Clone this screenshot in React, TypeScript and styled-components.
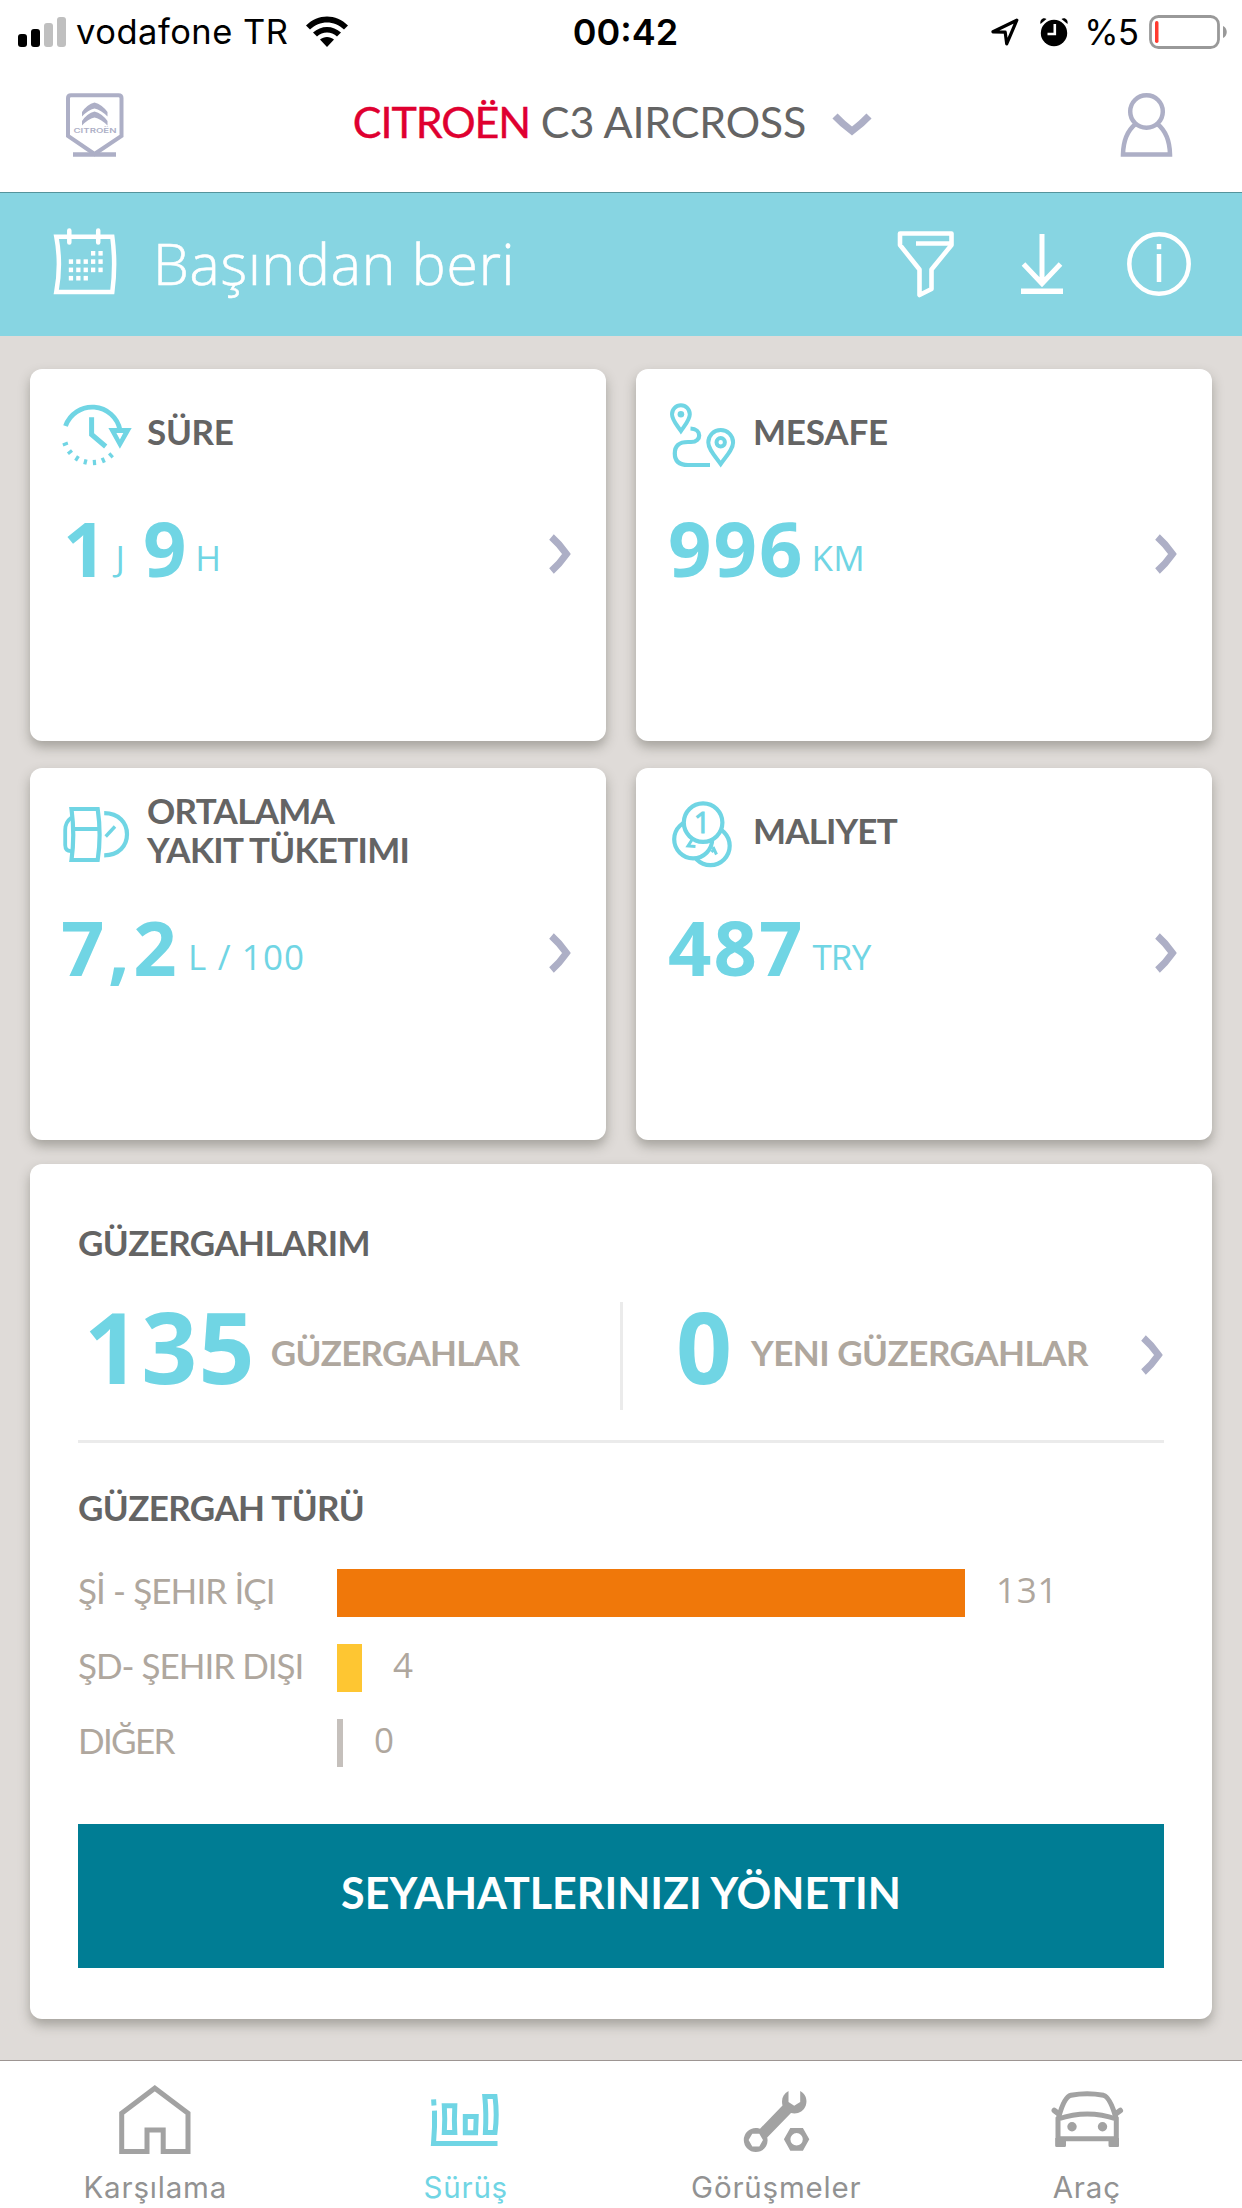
import React from "react";
import styled, { createGlobalStyle } from "styled-components";

const c = {
  aqua: "#70d5e4",
  banner: "#87d5e2",
  page: "#dfdbd8",
  ink: "#646464",
  taupe: "#afa79e",
  lilac: "#adafc6",
  red: "#df0030",
  teal: "#007d94",
  line: "#ebebeb",
  tab: "#929292",
  tabIcon: "#a2a2a2",
};

const lato = `Lato, "Open Sans", sans-serif`;
const open = `"Open Sans", "Noto Sans", sans-serif`;
const inter = `Inter, Roboto, sans-serif`;

const Global = createGlobalStyle`
  * { box-sizing: border-box; }
  body { margin: 0; background: ${c.page}; }
  svg { display: block; flex: none; overflow: visible; }
`;

const Screen = styled.div`
  width: 1242px;
  height: 2208px;
  display: flex;
  flex-direction: column;
  background: ${c.page};
  overflow: hidden;
  white-space: nowrap;
`;

/* ---------- status bar ---------- */
const StatusBar = styled.div`
  height: 62px;
  flex: none;
  display: grid;
  grid-template-columns: 1fr auto 1fr;
  align-items: center;
  padding: 0 15px 0 18px;
  background: #fff;
  color: #000;
  font: 400 35px/62px ${inter};
`;
const StatusSide = styled.div<{ $end?: boolean }>`
  display: flex;
  align-items: center;
  justify-content: ${(p) => (p.$end ? "flex-end" : "flex-start")};
`;
const Carrier = styled.span`
  margin: 0 17px 0 9px;
  font-size: 34.5px;
  letter-spacing: 0.5px;
`;
const Clock = styled.span`
  padding: 1px 0 0 6px;
  font-size: 36px;
  font-weight: 600;
`;
const Percent = styled.span`
  margin: 0 11px 0 16px;
  letter-spacing: -1px;
`;
const AlarmSlot = styled.span`
  margin-left: 21px;
`;

/* ---------- header ---------- */
const Header = styled.header`
  height: 131px;
  flex: none;
  display: flex;
  align-items: center;
  justify-content: space-between;
  padding: 0 68px 5px 64px;
  background: #fff;
  border-bottom: 1px solid #55949c;
`;
const CarPicker = styled.div`
  display: flex;
  align-items: center;
  padding-right: 20px;
`;
const CarName = styled.h1`
  margin: 0 26px 6px 0;
  font: 400 43px/50px ${lato};
  letter-spacing: -0.2px;
  color: ${c.ink};
`;
const Brand = styled.span`
  color: ${c.red};
  letter-spacing: -1.1px;
  -webkit-text-stroke: 0.4px currentColor;
`;

/* ---------- period banner ---------- */
const Banner = styled.div`
  height: 143px;
  flex: none;
  display: flex;
  align-items: center;
  padding: 0 49px 1px 52px;
  background: ${c.banner};
  color: #fff;
`;
const CalendarSlot = styled.div`
  padding-bottom: 6px;
`;
const Period = styled.div`
  flex: 1;
  padding: 0 0 2px 35px;
  font: 300 57px/80px ${open};
  letter-spacing: 0.8px;
  -webkit-text-stroke: 0.6px currentColor;
`;
const BannerActions = styled.div`
  display: grid;
  grid-template-columns: 60px 46px 68px;
  align-items: center;
  column-gap: 60px;
`;
const FunnelSlot = styled.div`
  margin-left: -3px;
`;

/* ---------- cards ---------- */
const Main = styled.main`
  flex: 1;
  padding: 33px 30px 0;
`;
const Card = styled.section`
  background: #fff;
  border-radius: 12px;
  box-shadow: 0 6px 12px rgba(60, 60, 50, 0.36);
`;
const Grid = styled.div`
  display: grid;
  grid-template-columns: 576px 576px;
  gap: 27px 30px;
`;
const StatCard = styled(Card)`
  height: 372px;
  padding: 26px 35px 0 32px;
`;
const StatHead = styled.div`
  height: 72px;
  display: flex;
  align-items: center;
  gap: 13px;
`;
const Title = styled.h2<{ $ls?: number }>`
  margin: 0;
  font: 700 35px/39px ${lato};
  letter-spacing: ${(p) => p.$ls ?? -0.6}px;
  color: ${c.ink};
`;
const StatValue = styled.div`
  height: 80px;
  margin-top: 41px;
  display: flex;
  justify-content: space-between;
`;
const Figures = styled.div`
  display: flex;
  color: ${c.aqua};
`;
const Big = styled.span<{ $ls?: number; $ml?: number }>`
  margin-left: ${(p) => p.$ml ?? 0}px;
  font: 700 76px/80px ${open};
  letter-spacing: ${(p) => p.$ls ?? 2}px;
`;
const Unit = styled.span<{ $ml?: number; $ls?: number }>`
  margin-left: ${(p) => p.$ml ?? 0}px;
  padding-top: 10px;
  font: 400 35px/80px ${open};
  letter-spacing: ${(p) => p.$ls ?? 0}px;
`;
const ChevronSlot = styled.div`
  display: flex;
  align-items: center;
  padding-top: 12px;
`;

/* ---------- trips ---------- */
const Trips = styled(Card)`
  height: 855px;
  margin-top: 24px;
  padding: 59px 48px 0;
  display: flex;
  flex-direction: column;
`;
const Totals = styled.div`
  height: 161px;
  margin-top: 20px;
  flex: none;
  display: flex;
  padding-top: 20px;
  border-bottom: 3px solid ${c.line};
`;
const Total = styled.div`
  display: flex;
  flex: 1;
  align-items: center;
  height: 108px;
  padding-left: 53px;
`;
const TotalLeft = styled(Total)`
  flex: none;
  width: 545px;
  padding-left: 6px;
  border-right: 3px solid ${c.line};
`;
const TotalNumber = styled.span<{ $ls: number }>`
  margin-top: -20px;
  font: 700 98px/108px ${open};
  letter-spacing: ${(p) => p.$ls}px;
  color: ${c.aqua};
`;
const TotalLabel = styled.span<{ $ml: number; $ls: number }>`
  margin: -8px 0 0 ${(p) => p.$ml}px;
  font: 700 35px/40px ${lato};
  letter-spacing: ${(p) => p.$ls}px;
  color: ${c.taupe};
`;
const TotalArrow = styled.span`
  margin: -2px 1px 0 auto;
`;
const TypeTitle = styled(Title)`
  margin-top: 45px;
`;
const Chart = styled.div`
  margin-top: 42px;
  display: flex;
  flex-direction: column;
  gap: 27px;
`;
const ChartRow = styled.div`
  height: 48px;
  display: flex;
  align-items: center;
`;
const ChartLabel = styled.span<{ $ls: number }>`
  width: 259px;
  padding-bottom: 6px;
  font: 400 35px/42px ${lato};
  letter-spacing: ${(p) => p.$ls}px;
  color: ${c.taupe};
`;
const Bar = styled.span<{ $color: string }>`
  height: 48px;
  background: ${(p) => p.$color};
`;
const ChartValue = styled.span`
  margin-left: 31px;
  padding-bottom: 6px;
  font: 400 35px/42px ${open};
  letter-spacing: 0.8px;
  color: ${c.taupe};
`;
const Manage = styled.button`
  height: 144px;
  margin-top: 57px;
  padding: 0 0 7px;
  border: 0;
  background: ${c.teal};
  color: #fff;
  font: 700 43px/52px ${lato};
  letter-spacing: 0;
`;

/* ---------- tab bar ---------- */
const TabBar = styled.nav`
  height: 148px;
  flex: none;
  display: grid;
  grid-template-columns: repeat(4, 1fr);
  background: #fff;
  border-top: 1px solid #9d9592;
`;
const Tab = styled.a<{ $active?: boolean }>`
  display: flex;
  flex-direction: column;
  align-items: center;
  padding-top: 22px;
  color: ${(p) => (p.$active ? c.aqua : c.tabIcon)};
`;
const TabLabel = styled.span<{ $active?: boolean }>`
  margin-top: 10px;
  font: 400 29.5px/40px ${inter};
  letter-spacing: 0.8px;
  color: ${(p) => (p.$active ? c.aqua : c.tab)};
`;

/* ---------- drawings ---------- */
const Signal = () => (
  <svg width="49" height="32" viewBox="0 0 49 32">
    <rect x="0" y="18" width="9" height="13" rx="3" />
    <rect x="13" y="13" width="9" height="18" rx="3" />
    <rect x="26" y="7" width="9" height="24" rx="3" fill="#bfbfbf" />
    <rect x="39" y="1" width="9" height="30" rx="3" fill="#bfbfbf" />
  </svg>
);
const Wifi = () => (
  <svg width="42" height="32" viewBox="0 0 42 32">
    <path d="M0 9.5C12-2.5 30-2.5 42 9.5L38 13.5C28.5 4 13.500 4 4 13.500Z" />
    <path d="M7 16.500C15 9 27 9 35 16.500L31 20.500C25.500 15 16.500 15 11 20.500Z" />
    <path d="M14 23.500C18 20 24 20 28 23.500L21 31Z" />
  </svg>
);
const Locate = () => (
  <svg width="28" height="28" viewBox="0 0 28 28" fill="none" stroke="#000" strokeWidth="3.200" strokeLinejoin="round">
    <path d="M25.800 2.200L2 13.800L14.200 14.200L15.700 25.800Z" />
  </svg>
);
const Alarm = () => (
  <svg width="28" height="30" viewBox="0 0 28 30">
    <circle cx="14" cy="16" r="13.200" />
    <path d="M.500 7C-.500 3 3 0 6.500 2ZM27.500 7C28.500 3 25 0 21.500 2Z" />
    <path d="M14.800 7V17H7.500" fill="none" stroke="#fff" strokeWidth="2.600" />
  </svg>
);
const Battery = () => (
  <svg width="78" height="34" viewBox="0 0 78 34">
    <rect x="1.500" y="1.500" width="68" height="31" rx="8" fill="none" stroke="#999" strokeWidth="2.800" />
    <rect x="6" y="6" width="3.500" height="22" rx="1.700" fill="#ff3b30" />
    <path d="M74 11C79 13 79 21 74 23Z" fill="#999" />
  </svg>
);
const Logo = () => (
  <svg width="62" height="68" viewBox="0 0 62 68" fill="none" stroke={c.lilac} strokeWidth="4">
    <path d="M30.500 63L4 45V7Q4 4.300 7 4.300H54.500Q57.500 4.300 57.500 7V45Z" />
    <path d="M9 63.500H52" strokeWidth="4.600" />
    <g fill={c.lilac} stroke="none">
      <path d="M18 21Q23 13.500 30.500 11.500Q38 13.500 43.500 21V25.500Q37 19 30.500 17.500Q24 19 18 25.500Z" />
      <path d="M18 30Q23 22.500 30.500 20.500Q38 22.500 43.500 30V34.500Q37 28 30.500 26.500Q24 28 18 34.500Z" />
      <text x="9.500" y="42.300" fontFamily="Inter, sans-serif" fontSize="6" fontWeight="600" textLength="43" lengthAdjust="spacingAndGlyphs">CITROËN</text>
    </g>
  </svg>
);
const ChevronDown = () => (
  <svg width="40" height="24" viewBox="0 0 40 24" fill="none" stroke={c.lilac} strokeWidth="7">
    <path d="M3 3Q10 10.500 20 18Q30 10.500 37 3" />
  </svg>
);
const Person = () => (
  <svg width="55" height="68" viewBox="0 0 55 68" fill="none" stroke={c.lilac} strokeWidth="4.500">
    <circle cx="27.500" cy="20.500" r="16.300" />
    <path d="M16.500 33C8 40 4.200 52 4 63.500H51C50.800 52 47 40 38.500 33" />
  </svg>
);
const calendarDots = [[3, 4], [0, 1, 2, 3, 4], [0, 1, 2, 3, 4], [0, 1, 2]];
const Calendar = () => (
  <svg width="66" height="70" viewBox="0 0 66 70" fill="none" stroke="#fff" strokeWidth="4.500">
    <path d="M4.300 10.700H60.300Q64 38 60.300 66H4.300Q9.500 38 4.300 10.700Z" />
    <path d="M17.300 4.500V16.500M46.200 4.500V16.500" strokeLinecap="round" />
    {calendarDots.map((cols, r) =>
      cols.map((k) => (
        <rect key={`${r}-${k}`} x={16.800 + k * 7.400} y={25 + r * 8.300} width="4.300" height="4.600" fill="#fff" stroke="none" />
      ))
    )}
  </svg>
);
const Funnel = () => (
  <svg width="60" height="70" viewBox="0 0 60 70" fill="none" stroke="#fff" strokeWidth="4.600" strokeLinejoin="round">
    <path d="M4 4.500H55.500V16L35.500 40.500V60L23.500 66V40.500L4 16Z" />
    <path d="M20 14.500H54" />
  </svg>
);
const Download = () => (
  <svg width="46" height="64" viewBox="0 0 46 64" fill="none" stroke="#fff" strokeWidth="5">
    <path d="M23 2V52M4.500 32L23 51.500L41.500 32" />
    <path d="M2 59.200H44" strokeWidth="5.500" />
  </svg>
);
const Info = () => (
  <svg width="68" height="68" viewBox="0 0 68 68" fill="none" stroke="#fff" strokeWidth="4.500">
    <circle cx="34" cy="34" r="29.700" />
    <path d="M34 14V19.300M34 24V52" />
  </svg>
);
const ChevronRight = () => (
  <svg width="22" height="40" viewBox="0 0 22 40" fill="none" stroke={c.lilac} strokeWidth="7">
    <path d="M2.500 3Q10.500 10 17.500 20Q10.500 30 2.500 37" />
  </svg>
);

type IconProps = { children: React.ReactNode };
const CardIcon = ({ children }: IconProps) => (
  <svg width="72" height="72" viewBox="0 0 72 72" fill="none" stroke={c.aqua} strokeWidth="4.200">
    {children}
  </svg>
);
const TimeIcon = () => (
  <CardIcon>
    <path d="M3.500 31A28.300 28.300 0 0 1 58 35" strokeWidth="4.800" />
    <path d="M29.600 22.300V39.500L43.700 51.500" strokeWidth="5" />
    <path d="M46.400 33H69.700L57.900 53.700ZM54.400 38L57.900 44.500L61.300 38Z" fill={c.aqua} fillRule="evenodd" stroke="none" />
    {[48, 66.500, 85, 103.500, 122, 141, 160].map((a) => (
      <path key={a} d="M55.700 39.300H61" transform={`rotate(${a} 30 39.300)`} strokeWidth="3.200" />
    ))}
  </CardIcon>
);
const RouteIcon = () => (
  <CardIcon>
    <path d="M12.900 36C9 30 4 25 4 19.200a8.900 8.900 0 0 1 17.800 0C21.800 25 17 30 12.900 36Z" strokeWidth="4" />
    <circle cx="12.900" cy="19.300" r="3.300" fill={c.aqua} stroke="none" />
    <path d="M52.700 69C47 61 40.300 54 40.300 47.400a12.400 12.400 0 0 1 24.800 0C65.100 54 58.500 61 52.700 69Z" strokeWidth="4" />
    <circle cx="52.700" cy="47.300" r="4.200" strokeWidth="4" />
    <path d="M22.500 33.500C34 34 34 47 23 47H20C11 47 6.800 51 6.800 58.500S11 70 20 70H42" />
  </CardIcon>
);
const FuelIcon = () => (
  <CardIcon>
    <path d="M9.500 15H35.700Q39.500 41 35.700 66H9.500Q13 41 9.500 15ZM11 35H37" />
    <path d="M9.500 23.500Q3.200 28 3.200 36V51Q3.200 57.500 9.500 57" strokeWidth="3.800" />
    <path d="M42.200 19.200C57 19.200 65 29 65 40.200S57 61.300 42.200 61.300" />
    <path d="M43.700 42.500L53 32.500" strokeWidth="3.400" />
  </CardIcon>
);
const CoinsIcon = () => (
  <CardIcon>
    <circle cx="42.400" cy="51.800" r="19.300" />
    <path d="M45 53L48.500 60.500M43.500 58L46.500 55" strokeWidth="3" />
    <circle cx="25.200" cy="45.300" r="19" fill="#fff" />
    <path d="M24.500 45L20 52L27.500 52.500" strokeWidth="3" />
    <circle cx="35.100" cy="28.600" r="19.300" fill="#fff" />
    <text x="34" y="39" textAnchor="middle" fontFamily="Open Sans, sans-serif" fontSize="29" fontWeight="400" fill={c.aqua} strokeWidth="1">1</text>
  </CardIcon>
);

const TabIcon = ({ children }: IconProps) => (
  <svg width="80" height="74" viewBox="0 0 80 74" fill="none" stroke="currentColor" strokeWidth="5">
    {children}
  </svg>
);
const HomeIcon = () => (
  <TabIcon>
    <path d="M6.700 68.500V30.200L39.800 5.200L73 30.200V68.500H48.200V47H32V68.500Z" />
  </TabIcon>
);
const DrivingIcon = () => (
  <TabIcon>
    <path d="M7.600 16.300L8 22.500" />
    <path d="M8.500 27.700Q9 44 7.500 60.500H71.500" />
    <path d="M18.300 22.800H28.800Q28 37 28.800 49.500H18.300Q19.200 36 18.300 22.800ZM39.300 33.500H50.200L49.600 49.800H39.300Z" />
    <path d="M58.800 13.500H69Q71.400 32 69 49.500H59.400Q60.500 30 58.800 13.500Z" />
  </TabIcon>
);
const ServiceIcon = () => (
  <TabIcon>
    <g fill="currentColor" stroke="none">
      <path d="M19.800 45C22 45 23 45.300 24 45.700L46.500 22.500C45 16 47 11 52.500 8V19L58.200 22.800L64.200 19V8C70 11 71.500 17 69.800 22.500C67.500 29 61 31.500 55 30L31.200 54.500C33 62 28 69 19.800 69A12 12 0 0 1 19.800 45ZM16.300 50.800L12.600 57L16.300 63.500H23.300L27 57L23.300 50.800Z" fillRule="evenodd" />
      <path d="M47.900 56.300L54.300 45H66.900L73.300 56.300L66.900 67.700H54.300ZM66.800 56.300A6.200 6.200 0 1 0 54.400 56.300A6.200 6.200 0 1 0 66.800 56.300Z" fillRule="evenodd" />
    </g>
  </TabIcon>
);
const CarIcon = () => (
  <TabIcon>
    <path d="M11 63.500V36Q40.500 26 69.300 36V63.500M11 55.700H69.300" />
    <path d="M11.500 35Q17 14 24 12.300Q40 9.300 56.500 12.300Q63 14 69 35" />
    <path d="M8.300 55H19V62.500Q19 64 17.500 64H10Q8.300 64 8.300 62.500ZM61.500 55H72V62.500Q72 64 70.500 64H63Q61.500 64 61.500 62.500Z" fill="currentColor" stroke="none" />
    <path d="M7.300 27.500L12 31M73.300 27.500L68.500 31" strokeLinecap="round" strokeWidth="5.500" />
    <circle cx="25" cy="43.700" r="4.700" fill="currentColor" stroke="none" />
    <circle cx="55.500" cy="43.700" r="4.700" fill="currentColor" stroke="none" />
  </TabIcon>
);

/* ---------- data ---------- */
const tripTypes = [
  { label: "Şİ - ŞEHIR İÇI", value: 131, width: 628, color: "#f0780a", ls: -0.9 },
  { label: "ŞD- ŞEHIR DIŞI", value: 4, width: 25, color: "#fec632", ls: -1 },
  { label: "DIĞER", value: 0, width: 6, color: "#c5c0bc", ls: -1.7 },
];
const tabs = [
  { label: "Karşılama", icon: <HomeIcon /> },
  { label: "Sürüş", icon: <DrivingIcon />, active: true },
  { label: "Görüşmeler", icon: <ServiceIcon /> },
  { label: "Araç", icon: <CarIcon /> },
];

type StatProps = { icon: React.ReactNode; title: React.ReactNode; tracking?: number; children: React.ReactNode };
const Stat = ({ icon, title, tracking, children }: StatProps) => (
  <StatCard>
    <StatHead>
      {icon}
      <Title $ls={tracking}>{title}</Title>
    </StatHead>
    <StatValue>
      <Figures>{children}</Figures>
      <ChevronSlot>
        <ChevronRight />
      </ChevronSlot>
    </StatValue>
  </StatCard>
);

export default function App() {
  return (
    <Screen>
      <Global />
      <StatusBar>
        <StatusSide>
          <Signal />
          <Carrier>vodafone TR</Carrier>
          <Wifi />
        </StatusSide>
        <Clock>00:42</Clock>
        <StatusSide $end>
          <Locate />
          <AlarmSlot>
            <Alarm />
          </AlarmSlot>
          <Percent>%5</Percent>
          <Battery />
        </StatusSide>
      </StatusBar>

      <Header>
        <Logo />
        <CarPicker>
          <CarName>
            <Brand>CITROËN</Brand> C3 AIRCROSS
          </CarName>
          <ChevronDown />
        </CarPicker>
        <Person />
      </Header>

      <Banner>
        <CalendarSlot>
          <Calendar />
        </CalendarSlot>
        <Period>Başından beri</Period>
        <BannerActions>
          <FunnelSlot>
            <Funnel />
          </FunnelSlot>
          <Download />
          <Info />
        </BannerActions>
      </Banner>

      <Main>
        <Grid>
          <Stat icon={<TimeIcon />} title="SÜRE" tracking={-0.3}>
            <Big $ml={1}>1</Big>
            <Unit $ml={7}>J</Unit>
            <Big $ml={18}>9</Big>
            <Unit $ml={7}>H</Unit>
          </Stat>
          <Stat icon={<RouteIcon />} title="MESAFE" tracking={-0.2}>
            <Big>996</Big>
            <Unit $ml={7} $ls={0.5}>KM</Unit>
          </Stat>
          <Stat
            icon={<FuelIcon />}
            title={
              <>
                ORTALAMA
                <br />
                YAKIT TÜKETIMI
              </>
            }
            tracking={-0.7}
          >
            <Big $ls={3.5} $ml={-1}>7,2</Big>
            <Unit $ml={8} $ls={1.1}>L / 100</Unit>
          </Stat>
          <Stat icon={<CoinsIcon />} title="MALIYET" tracking={-0.85}>
            <Big>487</Big>
            <Unit $ml={8} $ls={-0.8}>TRY</Unit>
          </Stat>
        </Grid>

        <Trips>
          <Title>GÜZERGAHLARIM</Title>
          <Totals>
            <TotalLeft>
              <TotalNumber $ls={1.2}>135</TotalNumber>
              <TotalLabel $ml={15} $ls={-0.7}>GÜZERGAHLAR</TotalLabel>
            </TotalLeft>
            <Total>
              <TotalNumber $ls={0}>0</TotalNumber>
              <TotalLabel $ml={19} $ls={-0.5}>YENI GÜZERGAHLAR</TotalLabel>
              <TotalArrow>
                <ChevronRight />
              </TotalArrow>
            </Total>
          </Totals>
          <TypeTitle>GÜZERGAH TÜRÜ</TypeTitle>
          <Chart>
            {tripTypes.map((t) => (
              <ChartRow key={t.label}>
                <ChartLabel $ls={t.ls}>{t.label}</ChartLabel>
                <Bar $color={t.color} style={{ width: t.width }} />
                <ChartValue>{t.value}</ChartValue>
              </ChartRow>
            ))}
          </Chart>
          <Manage>SEYAHATLERINIZI YÖNETIN</Manage>
        </Trips>
      </Main>

      <TabBar>
        {tabs.map((t) => (
          <Tab key={t.label} $active={t.active}>
            {t.icon}
            <TabLabel $active={t.active}>{t.label}</TabLabel>
          </Tab>
        ))}
      </TabBar>
    </Screen>
  );
}
